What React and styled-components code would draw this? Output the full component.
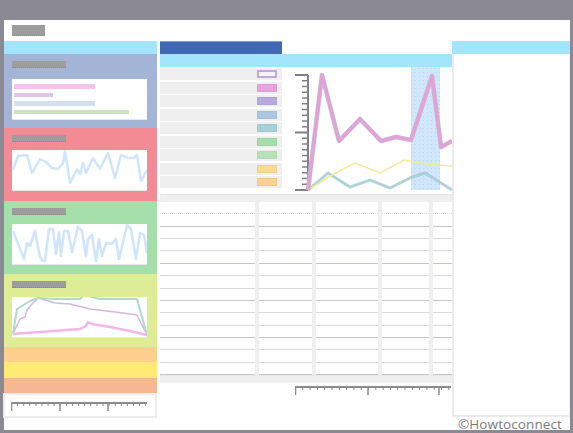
import React from "react";
import styled, { createGlobalStyle } from "styled-components";

const Global = createGlobalStyle`
  html, body { margin: 0; padding: 0; background: #8b8a94; }
  body { width: 573px; height: 433px; overflow: hidden; font-family: "Open Sans", "Noto Sans", sans-serif; }
  svg { display: block; }
`;

const Screen = styled.div`
  position: relative;
  width: 573px;
  height: 433px;
  padding: 20px 3px 3px 4px;
  box-sizing: border-box;
`;

const Window = styled.div`
  width: 566px;
  height: 410px;
  background: #fff;
  display: flex;
  flex-direction: column;
`;

const Header = styled.div`
  height: 21px;
  padding: 5px 0 0 8px;
  box-sizing: border-box;
`;

const Label = styled.div`
  width: ${(p) => p.w}px;
  height: ${(p) => p.h || 7}px;
  background: #9d9d9d;
  border-bottom: 1px dotted #888;
  box-sizing: border-box;
`;

const Main = styled.div`
  flex: 1;
  display: flex;
  align-items: flex-start;
`;

const LeftCol = styled.div`
  width: 153px;
  display: flex;
  flex-direction: column;
`;

const Bar = styled.div`
  height: ${(p) => p.h}px;
  background: ${(p) => p.c};
`;

const Section = styled.div`
  height: ${(p) => p.h}px;
  background: ${(p) => p.c};
  padding: 7px 0 0 8px;
  box-sizing: border-box;
  display: flex;
  flex-direction: column;
`;

const ChartBox = styled.div`
  margin-top: ${(p) => p.mt}px;
  width: 135px;
  height: 41px;
  background: #fff;
  border-bottom: 1px solid #e4e8ee;
  box-sizing: border-box;
`;

const LegendBox = styled(ChartBox)`
  padding: 5px 2px;
  display: flex;
  flex-direction: column;
  gap: 4px;
`;

const Stripe = styled.div`
  width: ${(p) => p.w}px;
  height: 5px;
  background: ${(p) => p.c};
`;

const RulerBox = styled.div`
  height: 25px;
  margin-left: -1px;
  border: 2px solid #ececec;
  box-sizing: border-box;
  padding: 7px 0 0 6px;
  background: #fff;
`;

const MidCol = styled.div`
  width: 292px;
  margin-left: 3px;
  display: flex;
  flex-direction: column;
`;

const TabRow = styled.div`
  height: 13px;
  display: flex;
`;

const Tab = styled.div`
  width: 122px;
  background: #4068b4;
  border-top: 1px solid #8aa0cc;
  box-sizing: border-box;
`;

const Upper = styled.div`
  height: 125px;
  display: flex;
`;

const List = styled.div`
  width: 122px;
  padding-top: 1px;
  display: flex;
  flex-direction: column;
  gap: 1.5px;
`;

const ListRow = styled.div`
  height: 12px;
  background: #efefef;
  display: flex;
  align-items: center;
  justify-content: flex-end;
  padding-right: 5px;
`;

const Swatch = styled.div`
  width: 20px;
  height: 8px;
  box-sizing: border-box;
  background: ${(p) => p.c};
  border: ${(p) => (p.b ? `2px solid ${p.b}` : "1px solid rgba(0,0,0,0.04)")};
`;

const ChartArea = styled.div`
  margin-left: 8px;
  flex: 1;
`;

const Table = styled.div`
  margin-top: 2px;
  height: 189px;
  display: flex;
  flex-direction: column;
`;

const Band = styled.div`
  height: ${(p) => p.h}px;
  background: #efefef;
  border-top: 1px dotted #e2e2e2;
  box-sizing: border-box;
`;

const Rows = styled.div`
  flex: 1;
  display: flex;
  flex-direction: column;
  background: #efefef;
`;

const TRow = styled.div`
  flex: 1;
  display: grid;
  grid-template-columns: 95px 53px 62px 47px 1fr;
  column-gap: 4px;
`;

const Cell = styled.div`
  background: #fff;
  border-bottom: 1px ${(p) => (p.dotted ? "dotted" : "solid")} ${(p) => (p.dark ? "#c6c4cc" : "#d9d9de")};
`;

const MidRuler = styled.div`
  height: 12px;
  padding: 3px 0 0 135px;
`;

const RightCol = styled.div`
  width: 118px;
  display: flex;
  flex-direction: column;
`;

const RightPanel = styled.div`
  height: 363px;
  border-left: 2px solid #ebebeb;
  border-bottom: 2px solid #ebebeb;
  border-right: 1px solid #f0f0f0;
  box-sizing: border-box;
  background: #fff;
`;

const Watermark = styled.div`
  position: absolute;
  right: 11px;
  bottom: 1px;
  font-family: "Open Sans", "Noto Sans", sans-serif;
  font-size: 13.5px;
  line-height: 15px;
  letter-spacing: 0.1px;
  color: #7a7a7a;
`;

const pts = (arr, ox, oy) => arr.map(([x, y]) => `${x - ox},${y - oy}`).join(" ");

const redLine = [[13,172],[18,158],[27,157],[32,175],[40,161],[46,164],[52,170],[58,171],[63,165],[65,153],[70,185],[77,171],[80,176],[83,165],[86,175],[93,160],[100,171],[108,155],[115,180],[121,157],[128,160],[134,160],[137,157],[141,183],[147,172]];
const greenLine = [[13,232],[24,260],[27,244],[30,247],[35,232],[40,258],[43,262],[45,262],[49,230],[53,230],[56,255],[59,233],[61,257],[64,232],[68,232],[72,253],[78,228],[82,232],[86,257],[88,240],[92,236],[96,262],[99,240],[102,257],[106,244],[112,245],[116,240],[119,260],[127,226],[131,230],[136,260],[140,234],[144,236],[147,254]];
const ygPink = [[13,335],[40,333],[80,330],[86,327],[88,323],[92,325],[110,328],[130,332],[147,336]];
const ygGreen = [[13,335],[17,310],[25,305],[30,302],[38,299],[55,300],[80,300],[84,296],[100,300],[137,300],[147,336]];
const ygGray = [[13,335],[20,320],[25,318],[27,311],[32,305],[38,299],[45,301],[55,304],[70,305],[90,310],[115,313],[137,316],[147,336]];

function Spark({ lines }) {
  return (
    <svg width="135" height="40" viewBox="0 0 135 40">
      {lines.map((l, i) => (
        <polyline key={i} points={l.p} fill="none" stroke={l.c} strokeWidth={l.w} strokeLinejoin="round" />
      ))}
    </svg>
  );
}

function Ruler({ width, minor, majors, h = 9 }) {
  const ticks = [];
  for (let x = 0.5; x <= width; x += minor) ticks.push(x);
  return (
    <svg width={width + 1} height={h} viewBox={`0 0 ${width + 1} ${h}`}>
      <line x1="0" y1="1" x2={width} y2="1" stroke="#8a8a90" strokeWidth="2" />
      {ticks.map((x, i) => (
        <line key={i} x1={x} y1="1" x2={x} y2="4" stroke="#8a8a90" strokeWidth="1" />
      ))}
      {majors.map((x, i) => (
        <line key={"m" + i} x1={x} y1="1" x2={x} y2={h} stroke="#8a8a90" strokeWidth="1.5" />
      ))}
    </svg>
  );
}

function MainChart() {
  const ox = 290, oy = 67;
  const pink = [[308,190],[322,75],[339,141],[360,119],[381,141],[396,137],[411,140],[432,76],[441,147],[452,141]];
  const yellow = [[308,190],[330,176],[355,163],[380,173],[404,160],[425,164],[452,166]];
  const teal = [[308,190],[328,173],[350,187],[370,180],[390,188],[410,178],[425,173],[452,190]];
  const ticks = [];
  for (let i = 0; i <= 20; i++) {
    const y = 75 + (i * 115) / 20 - oy;
    const major = i === 0 || i === 10 || i === 20;
    ticks.push(<line key={i} x1={major ? 5 : 12} y1={y} x2="18" y2={y} stroke="#808088" strokeWidth={major ? 2 : 1.5} />);
  }
  return (
    <svg width="162" height="125" viewBox="0 0 162 125">
      <defs>
        <pattern id="dots" width="4" height="4" patternUnits="userSpaceOnUse">
          <rect width="4" height="4" fill="#cfe6fb" />
          <rect x="1" y="1" width="1" height="1" fill="#b8d8f4" />
        </pattern>
      </defs>
      <rect x={411 - ox} y="0" width="29" height="123" fill="url(#dots)" />
      <line x1="18" y1={75 - oy} x2="18" y2={190 - oy} stroke="#808088" strokeWidth="2" />
      {ticks}
      <polyline points={pts(teal, ox, oy)} fill="none" stroke="#a9b4b0" strokeWidth="3" opacity="0.6" />
      <polyline points={pts(teal, ox, oy)} fill="none" stroke="#9fd6e2" strokeWidth="1.5" />
      <polyline points={pts(yellow, ox, oy)} fill="none" stroke="#ecec9c" strokeWidth="1.5" />
      <polyline points={pts(pink, ox, oy)} fill="none" stroke="#c8b8c8" strokeWidth="4.5" strokeLinejoin="round" />
      <polyline points={pts(pink, ox, oy)} fill="none" stroke="#e3a1dc" strokeWidth="3" strokeLinejoin="round" />
    </svg>
  );
}

const swatches = [
  { c: "#f4f4f4", b: "#c4a8d6" },
  { c: "#e8a4dc" },
  { c: "#b8aadb" },
  { c: "#aac6e0" },
  { c: "#a9d0da" },
  { c: "#a4dea9" },
  { c: "#b7e3bb" },
  { c: "#fad993" },
  { c: "#fbd18f" },
];

const sections = [
  { c: "#f28b94", lines: [{ p: pts(redLine, 12, 152), c: "#cfe5fb", w: 2.5 }], mt: 8 },
  { c: "#a4dea9", lines: [{ p: pts(greenLine, 12, 225), c: "#cfe5fb", w: 2.5 }], mt: 9 },
  {
    c: "#deed95",
    lines: [
      { p: pts(ygGray, 12, 298), c: "#d4b8d4", w: 1.5 },
      { p: pts(ygGreen, 12, 298), c: "#b2d8c8", w: 2 },
      { p: pts(ygPink, 12, 298), c: "#f2b6e8", w: 2.5 },
    ],
    mt: 9,
  },
];

export default function App() {
  const rows = Array.from({ length: 14 });
  return (
    <Screen>
      <Global />
      <Window>
        <Header>
          <Label w={33} h={11} />
        </Header>
        <Main>
          <LeftCol>
            <Bar h={13} c="#a3e5fd" />
            <Section h={74} c="#a4b4d6">
              <Label w={54} />
              <LegendBox mt={11}>
                <Stripe w={81} c="#f5c2ea" />
                <Stripe w={39} c="#dcc8e6" />
                <Stripe w={81} c="#d2e2ec" />
                <Stripe w={115} c="#cde2be" />
              </LegendBox>
            </Section>
            {sections.map((s, i) => (
              <Section key={i} h={73} c={s.c}>
                <Label w={54} />
                <ChartBox mt={s.mt}>
                  <Spark lines={s.lines} />
                </ChartBox>
              </Section>
            ))}
            <Bar h={15} c="#fdd08e" />
            <Bar h={16} c="#feea75" />
            <Bar h={15} c="#f5b794" />
            <RulerBox>
              <Ruler width={136} minor={6.1} majors={[0.5, 49, 97]} />
            </RulerBox>
          </LeftCol>
          <MidCol>
            <TabRow>
              <Tab />
            </TabRow>
            <Bar h={13} c="#a3e5fd" />
            <Upper>
              <List>
                {swatches.map((s, i) => (
                  <ListRow key={i}>
                    <Swatch c={s.c} b={s.b} />
                  </ListRow>
                ))}
              </List>
              <ChartArea>
                <MainChart />
              </ChartArea>
            </Upper>
            <Table>
              <Band h={8} />
              <Rows>
                {rows.map((_, i) => (
                  <TRow key={i}>
                    {[0, 1, 2, 3, 4].map((j) => (
                      <Cell key={j} dotted={i === 0} dark={i % 3 === 1} />
                    ))}
                  </TRow>
                ))}
              </Rows>
              <Band h={8} />
            </Table>
            <MidRuler>
              <Ruler width={156} minor={7.3} majors={[0.5, 73, 144]} />
            </MidRuler>
          </MidCol>
          <RightCol>
            <Bar h={13} c="#a3e5fd" />
            <RightPanel />
          </RightCol>
        </Main>
      </Window>
      <Watermark>©Howtoconnect</Watermark>
    </Screen>
  );
}
